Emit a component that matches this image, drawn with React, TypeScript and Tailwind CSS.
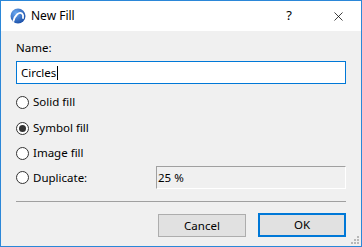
import { X } from 'lucide-react'

const font = { fontFamily: '"Noto Sans", "Liberation Sans", sans-serif' }

function Radio({ label, checked }: { label: string; checked?: boolean }) {
  return (
    <div className="flex items-center h-4 gap-[4px]">
      <span className="w-[13px] h-[13px] rounded-full border border-[#333] bg-white flex items-center justify-center">
        {checked && <span className="w-[7px] h-[7px] rounded-full bg-[#333]" />}
      </span>
      <span className="text-[11.5px] text-black">{label}</span>
    </div>
  )
}

function AppIcon() {
  return (
    <svg width="16" height="16" viewBox="0 0 16 16">
      <defs>
        <radialGradient id="g" cx="35%" cy="30%" r="75%">
          <stop offset="0%" stopColor="#6aa8f0" />
          <stop offset="100%" stopColor="#1a4fa8" />
        </radialGradient>
      </defs>
      <circle cx="8" cy="8" r="7.5" fill="url(#g)" />
      <path d="M3.5 13 C5 7 9 3.5 12 5.5 C13 6.3 13.3 8 13 10" stroke="#fff" strokeWidth="1.8" fill="none" strokeLinecap="round" />
    </svg>
  )
}

export default function App() {
  return (
    <div
      className="w-[362px] h-[247px] border border-[#2b87d8] flex flex-col bg-[#f0f0f0] overflow-hidden"
      style={font}
    >
      {/* Title bar */}
      <div className="h-[30px] bg-white flex items-center pl-[9px] shrink-0">
        <AppIcon />
        <span className="ml-[5px] text-[12px] text-black">New Fill</span>
        <span className="ml-auto text-[13px] text-black mr-[39px]">?</span>
        <X size={15} strokeWidth={1.2} className="text-black mr-[15px]" />
      </div>

      {/* Body */}
      <div className="flex flex-col px-[15px] pt-[9px] relative flex-1">
        <div className="text-[11.5px] leading-4 text-black">Name:</div>
        <div className="mt-[5px] h-[23px] border border-[#0078d7] bg-white flex items-center pl-[4px] text-[11.5px] text-black">
          Circles
          <span className="w-px h-[14px] bg-black ml-px" />
        </div>

        <div className="mt-[10px] flex flex-col">
          <Radio label="Solid fill" />
          <div className="mt-[10px]">
            <Radio label="Symbol fill" checked />
          </div>
          <div className="mt-[9px]">
            <Radio label="Image fill" />
          </div>
          <div className="mt-[5px] flex items-center h-[23px]">
            <div className="w-[140px]">
              <Radio label="Duplicate:" />
            </div>
            <div className="flex-1 h-[23px] border-t border-l border-[#a0a0a0] border-b-white border-r-white border-b border-r flex items-center pl-px text-[11.5px] text-black">
              25 %
            </div>
          </div>
        </div>

        <div className="mt-[12px] h-px bg-[#a0a0a0]" />

        <div className="mt-[12px] flex justify-end gap-[12px]">
          <button className="w-[88px] h-[23px] border border-[#adadad] bg-[#e1e1e1] text-[11.5px] text-black">
            Cancel
          </button>
          <button className="w-[88px] h-[24px] -mt-px border-2 border-[#0078d7] bg-[#e1e1e1] text-[11.5px] text-black">
            OK
          </button>
        </div>

        {/* resize grip */}
        <svg width="8" height="8" viewBox="0 0 8 8" className="absolute right-[2px] bottom-[2px]">
          {[
            [6, 0], [6, 3], [6, 6], [3, 3], [3, 6], [0, 6],
          ].map(([x, y]) => (
            <rect key={`${x}-${y}`} x={x} y={y} width="2" height="2" fill="#b8b8b8" />
          ))}
        </svg>
      </div>
    </div>
  )
}
